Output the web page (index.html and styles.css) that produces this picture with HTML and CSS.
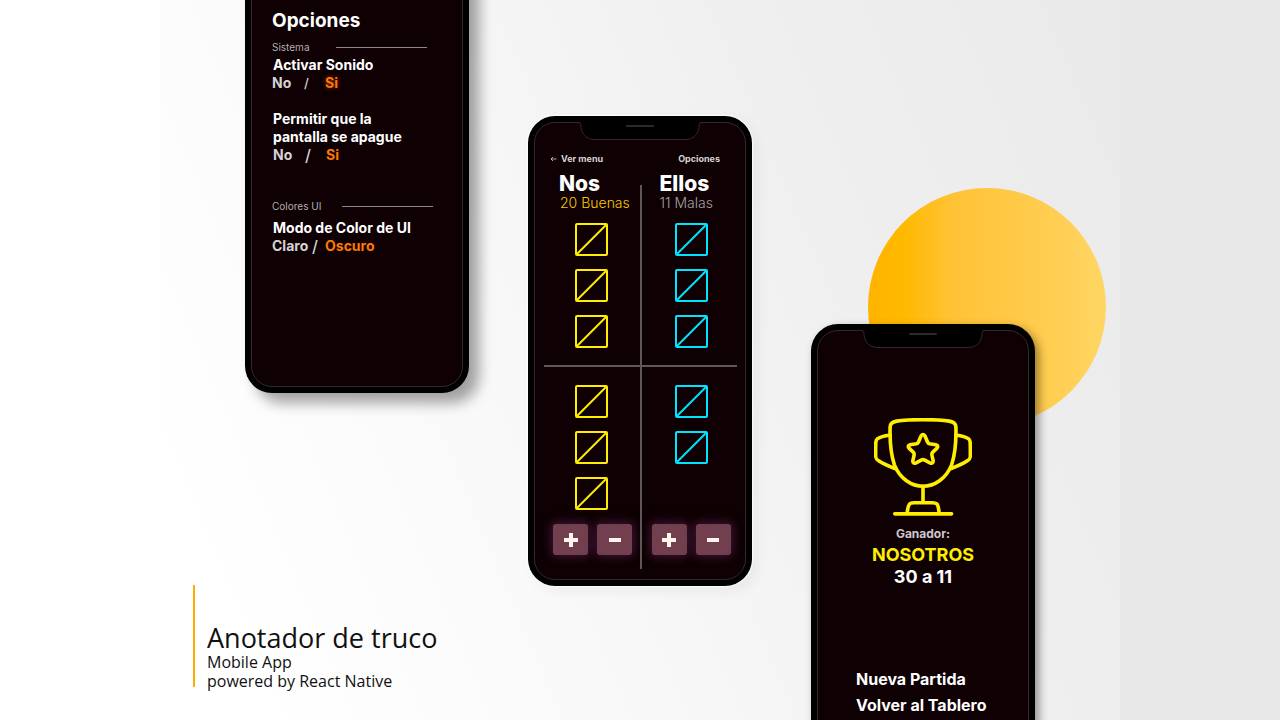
FILE: index.html
```html
<!DOCTYPE html>
<html lang="es">
<head>
<meta charset="utf-8">
<meta name="viewport" content="width=device-width, initial-scale=1">
<title>Anotador de truco</title>
<link rel="stylesheet" href="styles.css">
</head>
<body>
<svg class="defs" aria-hidden="true">
  <symbol id="mark" viewBox="0 0 33 33">
    <rect x="1" y="1" width="31" height="31" rx="1" fill="none" stroke="currentColor" stroke-width="2"/>
    <path d="M1.500 31.500L31.500 1.500" fill="none" stroke="currentColor" stroke-width="2"/>
  </symbol>
  <symbol id="notch" viewBox="0 0 122 19">
    <path d="M0 0H122C120 1 120 3 120 5C119 13 114 17.500 106 17.500H16C8 17.500 3 13 2 5C2 3 2 1 0 0Z" fill="#000"/>
    <path d="M0 .5C2 1 2 3 2 5C3 13 8 17.500 16 17.500H106C114 17.500 119 13 120 5C120 3 120 1 122 .5" fill="none" stroke="#33292c"/>
    <rect x="47" y="3" width="28" height="2" rx="1" fill="#2b2b2b"/>
  </symbol>
</svg>
<main class="stage">
  <div class="phones">
    <section class="phone phone-settings">
      <div class="screen settings">
        <h2 class="settings-title">Opciones</h2>
        <div class="section-label"><span class="section-name">Sistema</span><span class="rule"></span></div>
        <h3 class="setting-name">Activar Sonido</h3>
        <div class="choice"><button>No</button><span class="slash small">/</span><button class="on glow">Si</button></div>
        <h3 class="setting-name spaced">Permitir que la<br>pantalla se apague</h3>
        <div class="choice inset"><button>No</button><span class="slash">/</span><button class="on">Si</button></div>
        <div class="section-label second"><span class="section-name wide">Colores UI</span><span class="rule"></span></div>
        <h3 class="setting-name after-label">Modo de Color de UI</h3>
        <div class="choice theme"><button>Claro</button><span class="slash">/</span><button class="on">Oscuro</button></div>
      </div>
    </section>

    <section class="phone phone-board">
      <div class="screen">
        <svg class="notch" aria-hidden="true"><use href="#notch"/></svg>
        <nav class="topnav">
          <a href="#menu"><svg class="arrow" viewBox="0 0 7 6" aria-hidden="true"><path d="M6.500 3H1M3 1L1 3L3 5" fill="none" stroke="currentColor" stroke-width=".8"/></svg>Ver menu</a>
          <a href="#opciones">Opciones</a>
        </nav>
        <div class="board">
          <div class="team nos">
            <h2 class="team-name">Nos</h2>
            <p class="team-score">20 Buenas</p>
            <div class="marks first">
              <svg class="mark"><use href="#mark"/></svg>
              <svg class="mark"><use href="#mark"/></svg>
              <svg class="mark"><use href="#mark"/></svg>
            </div>
            <div class="marks last">
              <svg class="mark"><use href="#mark"/></svg>
              <svg class="mark"><use href="#mark"/></svg>
              <svg class="mark"><use href="#mark"/></svg>
            </div>
            <div class="actions">
              <button class="step" aria-label="Sumar a Nos"><svg viewBox="0 0 14 14"><path d="M7 0V14M0 7H14"/></svg></button>
              <button class="step" aria-label="Restar a Nos"><svg viewBox="0 0 14 14"><path d="M1 7H13"/></svg></button>
            </div>
          </div>
          <div class="divider"></div>
          <div class="team ellos">
            <h2 class="team-name">Ellos</h2>
            <p class="team-score">11 Malas</p>
            <div class="marks first">
              <svg class="mark"><use href="#mark"/></svg>
              <svg class="mark"><use href="#mark"/></svg>
              <svg class="mark"><use href="#mark"/></svg>
            </div>
            <div class="marks last">
              <svg class="mark"><use href="#mark"/></svg>
              <svg class="mark"><use href="#mark"/></svg>
            </div>
            <div class="actions">
              <button class="step" aria-label="Sumar a Ellos"><svg viewBox="0 0 14 14"><path d="M7 0V14M0 7H14"/></svg></button>
              <button class="step" aria-label="Restar a Ellos"><svg viewBox="0 0 14 14"><path d="M1 7H13"/></svg></button>
            </div>
          </div>
        </div>
      </div>
    </section>

    <div class="winner-wrap">
      <div class="sun"></div>
      <section class="phone phone-winner">
        <div class="screen winner">
          <svg class="notch" aria-hidden="true"><use href="#notch"/></svg>
          <svg class="trophy" viewBox="41 38 298 300" fill="none" stroke="#ffee00" stroke-width="11" stroke-linecap="round" stroke-linejoin="round" aria-hidden="true">
            <path d="M90 65C91 53 97 50 110 47C150 41 230 41 270 47C283 50 289 53 290 65C291 100 290 140 277 180C260 222 225 245 190 245C155 245 120 222 103 180C90 140 89 100 90 65Z"/>
            <path d="M90 89C75 91 60 94 51 101C46 105 46 108 46 150C46 160 47 162 54 167C70 178 85 184 104 191"/>
            <path d="M290 89C305 91 320 94 329 101C334 105 334 108 334 150C334 160 333 162 326 167C310 178 295 184 276 191"/>
            <path d="M184 92Q190 83 196 92L204 111Q206 115 210 116L229 119Q239 122 232 130L219 142Q216 145 217 150L221 168Q221 178 211 174L194 165Q190 163 186 165L169 174Q159 178 159 168L163 150Q164 145 161 142L148 130Q141 122 151 119L170 116Q174 115 176 111Z"/>
            <path d="M190 245V295M142 326C143 313 145 305 149 299C152 295 157 295 163 295H217C228 295 231 296 234 301C237 308 238 315 239 326M104 329H277"/>
          </svg>
          <p class="winner-label">Ganador:</p>
          <h2 class="winner-name">NOSOTROS</h2>
          <p class="winner-score">30 a 11</p>
          <nav class="winner-nav">
            <a href="#nueva">Nueva Partida</a>
            <a href="#tablero">Volver al Tablero</a>
          </nav>
        </div>
      </section>
    </div>
  </div>

  <header class="caption">
    <h1 class="caption-title">Anotador de truco</h1>
    <p class="caption-line">Mobile App<br>powered by React Native</p>
  </header>
</main>
</body>
</html>
```
FILE: styles.css
```css
* { box-sizing: border-box; }
body {
  margin: 0;
  font-family: Inter, "Open Sans", sans-serif;
  background: #fff;
}
h1, h2, h3, p { margin: 0; }
button {
  padding: 0;
  border: 0;
  background: none;
  color: inherit;
  font: inherit;
  text-align: left;
  cursor: pointer;
}
a { color: inherit; text-decoration: none; }
.defs { position: absolute; width: 0; height: 0; }

.stage {
  display: grid;
  height: 100vh;
  overflow: hidden;
  background:
    linear-gradient(#e8e8e8, #e8e8e8) right top / 12.5% 100% no-repeat,
    linear-gradient(67deg, #fff 8%, #f8f8f8 35%, #efefef 62%, #e9e9e9 92%) right top / 87.5% 100% no-repeat,
    #fff;
}
.phones, .caption { grid-area: 1 / 1; }
.phones {
  display: flex;
  justify-content: center;
  align-items: flex-start;
  gap: 59px;
  min-height: 0;
}

/* Phones */
.phone {
  flex: none;
  width: 224px;
  min-height: 470px;
  display: flex;
  padding: 6px;
  border-radius: 27px;
  background: #000;
  color: #fff;
}
.phone-settings { margin-top: -77px; box-shadow: 10px 10px 14px rgba(0, 0, 0, .36); }
.phone-board { margin-top: 116px; box-shadow: 0 0 2px 1px #fff, 5px 5px 14px rgba(0, 0, 0, .06); }
.winner-wrap { position: relative; margin-top: 324px; }
.phone-winner { position: relative; box-shadow: 4px 4px 10px rgba(0, 0, 0, .4); }
.sun {
  position: absolute;
  top: -136px;
  left: 57px;
  width: 238px;
  height: 238px;
  border-radius: 50%;
  background: linear-gradient(90deg, #ffb400, #ffb900 15%, #ffc235 35%, #ffcd50 75%, #ffd664);
}
.screen {
  flex: 1;
  display: flex;
  flex-direction: column;
  border: 1px solid #33292c;
  border-radius: 21px;
  background: #0e0003;
}
.notch {
  flex: none;
  align-self: center;
  width: 122px;
  height: 19px;
  margin-top: -1px;
}

/* Settings */
.settings { padding: 79px 20px 0; }
.settings-title { font-size: 19px; line-height: 24px; font-weight: 700; }
.section-label {
  display: flex;
  align-items: center;
  margin-top: 8px;
  font-size: 10px;
  line-height: 12px;
  color: #b5aeb0;
}
.section-label.second { margin-top: 36px; }
.section-name { width: 64px; }
.section-name.wide { width: 70px; }
.rule { width: 91px; height: 1px; background: #8d8789; }
.setting-name {
  margin-top: 3px;
  padding-left: 1px;
  font-size: 14px;
  line-height: 18px;
  font-weight: 700;
  white-space: nowrap;
}
.setting-name.spaced { margin-top: 18px; }
.setting-name.after-label { margin-top: 7px; }
.choice {
  display: grid;
  grid-template-columns: 32px 21px auto;
  font-size: 14px;
  line-height: 18px;
  font-weight: 700;
  color: #d5d2d3;
}
.choice.inset { padding-left: 1px; }
.choice.theme { grid-template-columns: 40px 13px auto; }
.slash { font-size: 16px; font-weight: 500; }
.slash.small { font-size: 13px; }
.choice .on { color: #ff7800; }
.choice .glow { text-shadow: 0 0 5px #a03000; }

/* Score board */
.topnav {
  display: flex;
  justify-content: space-between;
  margin-top: 12px;
  padding: 0 25px 0 15px;
  font-size: 9px;
  line-height: 12px;
  font-weight: 700;
  color: #d9d4d5;
}
.arrow { width: 7px; height: 6px; margin-right: 4px; }
.board {
  flex: 1;
  display: grid;
  grid-template-columns: 1fr 2px 1fr;
  padding: 8px 8px 10px 9px;
}
.divider { margin-top: 12px; background: #5f5859; }
.team { display: flex; flex-direction: column; }
.team-name {
  padding-left: 15px;
  font-size: 21px;
  line-height: 22px;
  font-weight: 800;
}
.team-score {
  padding-left: 16px;
  font-size: 14px;
  line-height: 15px;
  font-weight: 300;
  white-space: nowrap;
}
.nos .team-score { color: #ffc800; }
.ellos .team-score { color: #a8a1a3; }
.ellos .team-name, .ellos .team-score { padding-left: 18px; }
.marks {
  display: flex;
  flex-direction: column;
  align-items: center;
  gap: 13px;
}
.marks.first { padding: 13px 0 17px; }
.marks.last {
  min-height: 145px;
  padding-top: 18px;
  border-top: 2px solid #5f5859;
}
.ellos .marks, .ellos .actions { padding-left: 4px; }
.nos .actions { padding-left: 2px; }
.mark { display: block; width: 33px; height: 33px; }
.nos .mark { color: #ffee00; }
.ellos .mark { color: #00e5ff; }
.actions {
  display: flex;
  justify-content: center;
  gap: 9px;
  margin-top: 14px;
}
.step {
  display: grid;
  place-items: center;
  width: 35px;
  height: 31px;
  border-radius: 3px;
  background: #713f4e;
  box-shadow: 0 0 10px 2px rgba(110, 40, 100, .5);
}
.step svg { width: 14px; height: 14px; stroke: #fff4ee; stroke-width: 4; }

/* Winner */
.winner { align-items: center; }
.trophy { width: 98px; height: 99px; margin-top: 69px; }
.winner-label { margin-top: 10px; font-size: 12px; line-height: 14px; font-weight: 700; color: #d0c8d2; }
.winner-name { margin-top: 3px; font-size: 18px; line-height: 22px; font-weight: 700; color: #ffee00; }
.winner-score { font-size: 18px; line-height: 22px; font-weight: 700; }
.winner-nav {
  display: grid;
  align-self: stretch;
  gap: 4px;
  margin-top: 80px;
  padding-left: 38px;
  font-size: 16px;
  line-height: 22px;
  font-weight: 700;
}

/* Caption */
.caption {
  align-self: end;
  justify-self: start;
  margin: 0 0 33px 193px;
  padding: 38px 0 0 12px;
  border-left: 2px solid #ffaa00;
  font-family: "Open Sans", sans-serif;
  color: #111;
}
.caption-title { font-size: 27px; line-height: 30px; font-weight: 400; }
.caption-line { margin-bottom: -4px; font-size: 16px; line-height: 19px; }
```
